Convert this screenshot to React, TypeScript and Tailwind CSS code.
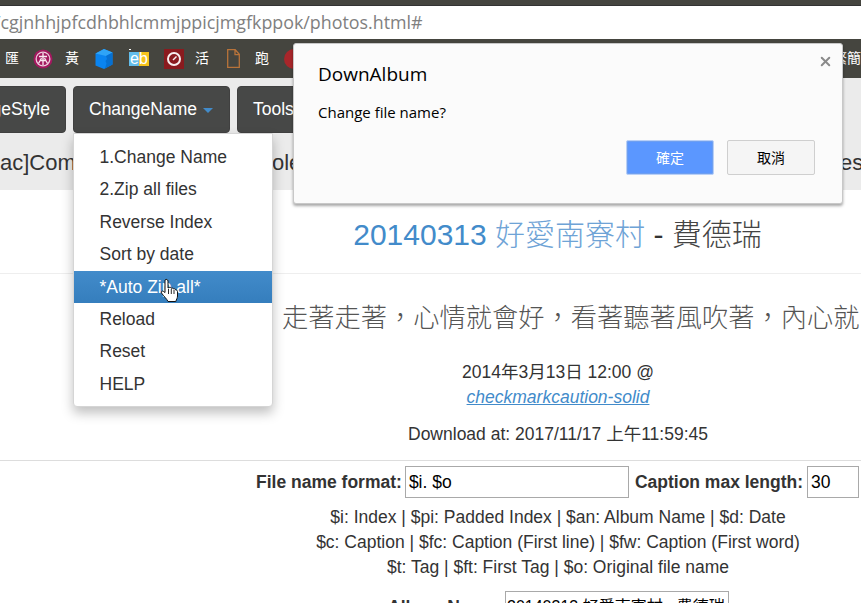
import { X } from "lucide-react";

const sans = "font-['Liberation_Sans','Noto_Sans_CJK_TC',sans-serif]";

const menuItems = [
  "1.Change Name",
  "2.Zip all files",
  "Reverse Index",
  "Sort by date",
  "*Auto Zip all*",
  "Reload",
  "Reset",
  "HELP",
];

const Bookmarks = () => (
  <div className="h-[39px] bg-[#45453f] flex items-center overflow-hidden whitespace-nowrap text-[14px] text-white shrink-0">
    <span className="ml-[5px] w-[14px]">匯</span>
    <svg className="ml-[14px]" width="20" height="20" viewBox="0 0 20 20">
      <circle cx="10" cy="10" r="9.500" fill="#a3185f" />
      <circle cx="10" cy="10" r="7.500" fill="#eccbdb" />
      <circle cx="10" cy="10" r="6.200" fill="#a3185f" />
      <path d="M10 4v12M6 7.500h8M5.500 14.500 8.500 9M14.500 14.500 11.500 9M6.500 11.500h7" stroke="#f9e9f0" strokeWidth="1.300" fill="none" />
    </svg>
    <span className="ml-[12px] w-[14px]">黃</span>
    <svg className="ml-[15px]" width="20" height="20" viewBox="0 0 20 20">
      <path d="M1.500 4.500 10 0l8.500 3.500v12L10 20l-8.500-3.500z" fill="#0a84f0" />
      <path d="M10 0l8.500 3.500L12 7 1.500 4.500z" fill="#2fa4f7" />
      <path d="M12 7l6.500-3.500v12L11 19.500l1.500-5-1-2.500 1.500-2z" fill="#0670d2" />
    </svg>
    <svg className="ml-[15px]" width="20" height="20" viewBox="0 0 20 20">
      <rect x="0" y="0" width="2" height="1" fill="#fff" />
      <rect x="0" y="3" width="10" height="14" fill="#63bdeb" />
      <rect x="10" y="3" width="10" height="14" fill="#f7c31a" />
      <text x="1" y="15" fontSize="16" fill="#fff" fontFamily="Liberation Sans">eb</text>
    </svg>
    <svg className="ml-[15px]" width="20" height="20" viewBox="0 0 20 20">
      <rect width="20" height="20" fill="#8a1a1e" />
      <circle cx="10" cy="10" r="6" fill="none" stroke="#f7eeee" strokeWidth="2" />
      <path d="M9 11l3.500-3.500" stroke="#f7eeee" strokeWidth="1.500" />
    </svg>
    <span className="ml-[11px] w-[14px]">活</span>
    <svg className="ml-[18px]" width="13" height="19" viewBox="0 0 13 19">
      <path d="M.7.7h7.500l4.100 4.600v13H.7zM8 .7v5h4.300" fill="none" stroke="#b8733a" strokeWidth="1.300" />
    </svg>
    <span className="ml-[15px] w-[14px]">跑</span>
    <svg className="ml-[15px]" width="20" height="20" viewBox="0 0 20 20">
      <circle cx="10" cy="10" r="10" fill="#a8262a" />
    </svg>
    <span className="ml-auto w-[28px]">繁簡</span>
  </div>
);

const NavButton = ({ children, className }: { children: React.ReactNode; className: string }) => (
  <div
    className={`h-[47px] rounded-[4px] bg-[#474847] border border-[#404040] text-white text-[17.5px] flex items-center shrink-0 ${className}`}
  >
    {children}
  </div>
);

const Dropdown = () => (
  <ul className="absolute left-[73px] top-[133px] w-[200px] h-[274px] py-[7px] bg-white border border-[#d5d5d5] rounded-b-[4px] shadow-[0_6px_12px_rgba(0,0,0,0.25)] text-[17.5px] text-[#333]">
    {menuItems.map((item, i) => (
      <li
        key={item}
        className={
          i === 4
            ? "h-[32.4px] pl-[25.5px] flex items-center text-white bg-gradient-to-b from-[#428bca] to-[#357ebd]"
            : "h-[32.4px] pl-[25.5px] flex items-center"
        }
      >
        {item}
      </li>
    ))}
  </ul>
);

const Dialog = () => (
  <div className="absolute left-[293px] top-[43px] w-[550px] h-[161px] bg-[#fbfbfb] border border-[#c8c8c8] rounded-[3px] shadow-[0_2px_3px_rgba(0,0,0,0.35)] pl-[24px] pr-[27px] pt-[16px] font-['Open_Sans',sans-serif] text-black">
    <X className="absolute right-[9px] top-[10px] text-[#8a8a8a]" size={15} strokeWidth={3.2} />
    <div className="text-[19px] leading-[28px]">DownAlbum</div>
    <div className="mt-[14px] text-[15px] leading-[20px]">Change file name?</div>
    <div className="mt-[18px] flex justify-end gap-[13px] text-[14px] font-['Noto_Sans_CJK_TC',sans-serif]">
      <div className="w-[88px] h-[35px] flex items-center justify-center bg-[#5b97ff] border border-[#b9d0f7] shadow-[inset_0_0_0_1px_#6e9ff0] rounded-[2px] text-white">
        確定
      </div>
      <div className="w-[88px] h-[35px] flex items-center justify-center bg-[#f5f5f5] border border-[#cfcfcf] rounded-[2px]">
        取消
      </div>
    </div>
  </div>
);

const HandCursor = () => (
  <svg className="absolute left-[160px] top-[278px]" width="20" height="25" viewBox="0 0 20 25">
    <path
      d="M5 2c1.200-1.200 3-.6 3 1v7l1.200-.5c1-.4 1.900 0 2.100.8.800-.5 2-.2 2.300.7 1-.5 2 0 2.200 1.100 1-.2 1.700.4 1.700 1.400V18c0 2.200-1.100 3.300-1.700 5.500H8C6.800 20.800 3.500 18 1.500 15c-.7-1.100.6-2.500 1.800-1.700L5 14.500V3z"
      fill="#fff"
      stroke="#111"
      strokeWidth="1"
    />
    <path d="M8.500 11v5M11.300 11v5M14 12v4" stroke="#111" strokeWidth=".9" />
  </svg>
);

export default function App() {
  return (
    <div className={`relative w-[861px] h-[603px] overflow-hidden bg-white flex flex-col text-[#333] text-[17.5px] ${sans}`}>
      <div className="h-[6px] bg-[#45453f] border-b border-[#333] shrink-0" />
      <div className="h-[33px] bg-white flex items-center overflow-hidden whitespace-nowrap shrink-0 font-['Open_Sans',sans-serif] text-[17.85px] text-[#808080]">
        <span className="ml-[-6px]">/cgjnhhjpfcdhbhlcmmjppicjmgfkppok/photos.html#</span>
      </div>
      <Bookmarks />

      <div className="h-[112px] bg-[#ebebeb] shrink-0 overflow-hidden">
        <div className="flex gap-[7px] pt-[8px] ml-[-60px]">
          <NavButton className="w-[126px] justify-end pr-[15px]">
            <span>ChangeStyle</span>
          </NavButton>
          <NavButton className="w-[157px] pl-[15px]">
            <span>ChangeName</span>
            <span className="ml-[6px] mt-[2px] border-x-[5px] border-x-transparent border-t-[5px] border-t-[#428bca]" />
          </NavButton>
          <NavButton className="w-[100px] pl-[15px]">
            <span>Tools</span>
          </NavButton>
        </div>
        <div className="relative h-[57px] text-[22px] text-[#333]">
          <span className="absolute left-0 top-[17px] leading-[26px]">ac]Com</span>
          <span className="absolute left-[272px] top-[17px] leading-[26px]">ole</span>
          <span className="absolute left-[840px] top-[17px] leading-[26px]">es</span>
        </div>
      </div>

      <div className="flex flex-col items-center">
        <h1 className="mt-[24px] h-[40px] pl-[254px] flex items-center whitespace-nowrap text-[30px] font-normal">
          <span className="text-[#428bca]">
            20140313 <span className="font-light text-[#6ea3d6]">好愛南寮村</span>
          </span>
          <span>
            &nbsp;- <span className="font-light text-[#444]">費德瑞</span>
          </span>
        </h1>
        <hr className="w-full mt-[19px] border-[#eeeeee]" />
      </div>

      <div className="mt-[27px] h-[36px] pl-[282px] flex items-center whitespace-nowrap text-[26.25px] font-light text-[#555]">
        走著走著，心情就會好，看著聽著風吹著，內心就
      </div>

      <div className="mt-[24px] pl-[255px] flex flex-col items-center text-center">
        <div className="leading-[22px]">2014年3月13日 12:00 @</div>
        <a className="mt-[3px] leading-[22px] italic underline text-[#428bca]">checkmarkcaution-solid</a>
        <div className="mt-[15px] leading-[22px]">Download at: 2017/11/17 上午11:59:45</div>
      </div>

      <hr className="mt-[15px] border-[#dddddd]" />

      <div className="mt-[5px] h-[32px] flex items-center whitespace-nowrap font-bold pl-[256px]">
        <span>File name format:</span>
        <div className="ml-[3px] w-[224px] h-[32px] shrink-0 border border-[#a9a9a9] flex items-center pl-[3px] font-normal text-black">
          $i. $o
        </div>
        <span className="ml-[6px]">Caption max length:</span>
        <div className="ml-[4px] w-[52px] h-[32px] shrink-0 border border-[#a9a9a9] flex items-center pl-[3px] font-normal text-black">
          30
        </div>
      </div>

      <div className="mt-[7px] pl-[255px] flex flex-col items-center whitespace-nowrap leading-[25px]">
        <div>$i: Index | $pi: Padded Index | $an: Album Name | $d: Date</div>
        <div>$c: Caption | $fc: Caption (First line) | $fw: Caption (First word)</div>
        <div>$t: Tag | $ft: First Tag | $o: Original file name</div>
      </div>

      <div className="mt-[11px] h-[32px] pl-[388px] flex items-center whitespace-nowrap">
        <span className="font-bold w-[117px] shrink-0">Album Name:</span>
        <div className="w-[224px] h-[32px] shrink-0 border border-[#a9a9a9] pl-[1px] flex items-center overflow-hidden text-black text-[16px]">
          20140313 好愛南寮村 - 費德瑞
        </div>
      </div>

      <Dropdown />
      <HandCursor />
      <Dialog />
    </div>
  );
}
